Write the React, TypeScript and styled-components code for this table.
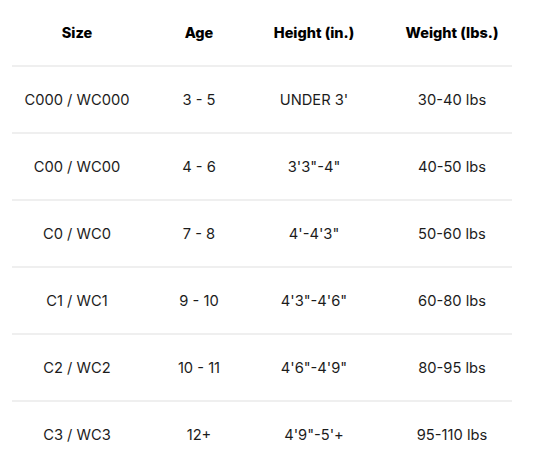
import React from "react";
import styled, { createGlobalStyle } from "styled-components";

const Global = createGlobalStyle`
  html, body { margin: 0; padding: 0; background: #ffffff; }
  body { font-family: Inter, "Noto Sans", "Liberation Sans", sans-serif; }
`;

const Wrap = styled.div`
  padding: 0 21px 0 12px;
`;

const Table = styled.div`
  display: grid;
  grid-template-columns: 130px 114px 116px 140px;
  width: 500px;
`;

const Row = styled.div`
  display: contents;
`;

const Cell = styled.div<{ $head?: boolean; $last?: boolean; $shift?: number }>`
  height: ${(p) => (p.$head ? 67 : 67)}px;
  display: flex;
  align-items: center;
  justify-content: center;
  border-bottom: ${(p) => (p.$last ? "2px solid transparent" : "2px solid #efefef")};
  font-size: ${(p) => (p.$head ? "14.5px" : "14.7px")};
  font-weight: ${(p) => (p.$head ? 800 : 400)};
  color: ${(p) => (p.$head ? "#000000" : "#1c1c1c")};
  padding-left: ${(p) => (p.$shift ?? 0) * 2}px;
  white-space: nowrap;
  box-sizing: border-box;
`;

const head = ["Size", "Age", "Height (in.)", "Weight (lbs.)"];
const rows = [
  ["C000 / WC000", "3 - 5", "UNDER 3'", "30-40 lbs"],
  ["C00 / WC00", "4 - 6", "3'3\"-4\"", "40-50 lbs"],
  ["C0 / WC0", "7 - 8", "4'-4'3\"", "50-60 lbs"],
  ["C1 / WC1", "9 - 10", "4'3\"-4'6\"", "60-80 lbs"],
  ["C2 / WC2", "10 - 11", "4'6\"-4'9\"", "80-95 lbs"],
  ["C3 / WC3", "12+", "4'9\"-5'+", "95-110 lbs"],
];
const shifts = [0, 0, 0, 10];

export default function App() {
  return (
    <>
      <Global />
      <Wrap>
        <Table>
          <Row>
            {head.map((h, i) => (
              <Cell key={h} $head $shift={shifts[i]}>
                {h}
              </Cell>
            ))}
          </Row>
          {rows.map((r, ri) => (
            <Row key={ri}>
              {r.map((c, ci) => (
                <Cell key={ci} $last={ri === rows.length - 1} $shift={shifts[ci]}>
                  {c}
                </Cell>
              ))}
            </Row>
          ))}
        </Table>
      </Wrap>
    </>
  );
}
